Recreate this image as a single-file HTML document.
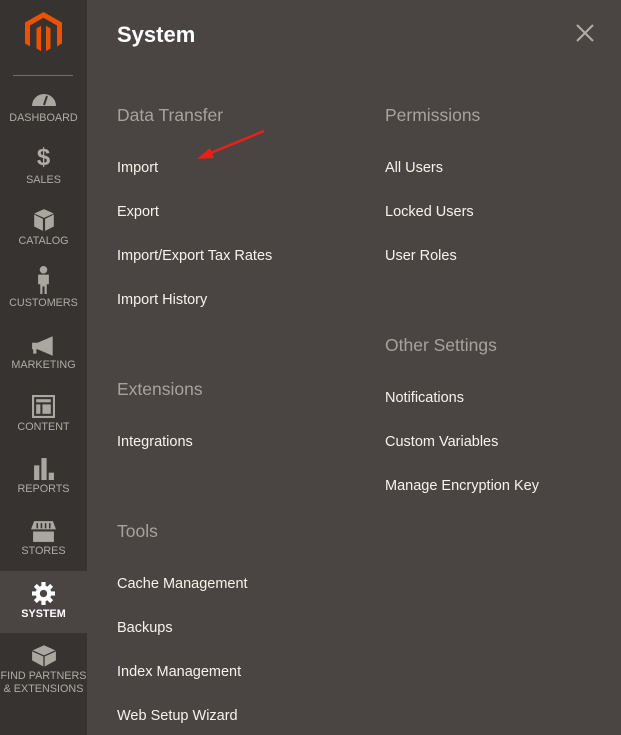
<!DOCTYPE html>
<html><head><meta charset="utf-8"><style>
body{margin:0;width:621px;height:735px;background:#4a4542;font-family:"Liberation Sans",sans-serif;position:relative;overflow:hidden}
#sb{position:absolute;left:0;top:0;width:87px;height:735px;background:#373330}
.it{position:absolute;left:0;width:87px;text-align:center;color:#b0aba5;font-size:10.8px;line-height:13px}
.it svg{display:block;margin:0 auto}
.act{background:#4a4542;color:#fff;font-weight:bold}
.t{position:absolute;color:#f7f3eb;font-size:14.5px;line-height:20px;white-space:nowrap;margin-top:1px}
.h{position:absolute;color:#a8a29c;font-size:17.5px;line-height:22px;white-space:nowrap;margin-top:2px}
</style></head><body>
<div id="sb">
<svg style="position:absolute;left:25px;top:12px" width="37" height="42" viewBox="0 0 37 42"><path d="M18.5 0L0 10.5V31.5l5 3V13.5l13.5-7.8 13.5 7.8v21l5-3V10.5z" fill="#eb5202"/><path d="M16 13.8v25.2l2.5 1.5 2.5-1.5V13.8l4.5 2.6v20.1l-7 4-7-4V16.4z" fill="#eb5202"/></svg>
<div style="position:absolute;left:13px;top:75px;width:60px;height:1px;background:#736e69"></div>
<div class="it" style="top:89px"><svg width="26" height="18" viewBox="0 0 26 18"><path d="M1 17A12 12 0 0 1 25 17z" fill="#aaa6a0"/><path d="M13 16L16 7" stroke="#373330" stroke-width="2"/></svg><div style="margin-top:5px">DASHBOARD</div></div>
<div class="it" style="top:146px"><div style="font-size:24px;font-weight:bold;line-height:24px">$</div><div style="margin-top:4px">SALES</div></div>
<div class="it" style="top:208px"><svg width="22" height="24" viewBox="0 0 20 22"><path d="M10 1L19 5 10 9 1 5z M1 6l8 4v11l-8-4z M19 6l-8 4v11l8-4z" fill="#aaa6a0"/></svg><div style="margin-top:3px">CATALOG</div></div>
<div class="it" style="top:266px"><svg width="13" height="28" viewBox="0 0 12 26"><circle cx="6" cy="3.5" r="3.5" fill="#aaa6a0"/><path d="M1 8h10v9h-2v9h-2v-7h-2v7h-2v-9h-2z" fill="#aaa6a0"/></svg><div style="margin-top:3px">CUSTOMERS</div></div>
<div class="it" style="top:336px"><svg width="26" height="20" viewBox="0 0 24 18"><path d="M1 6h5l14-6v18L6 12H5v4H2v-4H1z" fill="#aaa6a0"/></svg><div style="margin-top:3px">MARKETING</div></div>
<div class="it" style="top:395px"><svg width="23" height="23" viewBox="0 0 22 22"><rect x="1" y="1" width="20" height="20" fill="none" stroke="#aaa6a0" stroke-width="2"/><rect x="4" y="4" width="14" height="3" fill="#aaa6a0"/><rect x="4" y="9" width="4" height="9" fill="#aaa6a0"/><rect x="10" y="9" width="8" height="9" fill="#aaa6a0"/></svg><div style="margin-top:3px">CONTENT</div></div>
<div class="it" style="top:457px"><svg width="21" height="23" viewBox="0 0 20 22"><rect x="1" y="8" width="5" height="14" fill="#aaa6a0"/><rect x="8" y="1" width="5" height="21" fill="#aaa6a0"/><rect x="15" y="15" width="5" height="7" fill="#aaa6a0"/></svg><div style="margin-top:3px">REPORTS</div></div>
<div class="it" style="top:521px"><svg width="25" height="21" viewBox="0 0 24 20"><path d="M3 0h18l3 8H0z" fill="#aaa6a0"/><path d="M6 2v5M10 2v5M14 2v5M18 2v5" stroke="#373330" stroke-width="1.5"/><rect x="2" y="10" width="20" height="10" fill="#aaa6a0"/></svg><div style="margin-top:3px">STORES</div></div>
<div class="it act" style="top:571px;height:62px"><svg style="margin-top:11px" width="23" height="23" viewBox="0 0 22 22"><g fill="#fff"><circle cx="11" cy="11" r="7.5"/><rect x="9" y="0" width="4" height="22"/><rect x="0" y="9" width="22" height="4"/><rect x="9" y="0" width="4" height="22" transform="rotate(45 11 11)"/><rect x="9" y="0" width="4" height="22" transform="rotate(-45 11 11)"/></g><circle cx="11" cy="11" r="3.5" fill="#4a4542"/></svg><div style="margin-top:3px">SYSTEM</div></div>
<div class="it" style="top:643px"><svg width="26" height="24" viewBox="0 0 24 22"><path d="M12 2L23 7v9l-11 6L1 16V7z" fill="#aaa6a0"/><path d="M1 7l11 5 11-5M12 12v10" stroke="#373330" stroke-width="1.2" fill="none"/></svg><div style="margin-top:3px">FIND PARTNERS<br>&amp; EXTENSIONS</div></div>
</div>
<div style="position:absolute;left:117px;top:21px;color:#fff;font-size:22px;font-weight:bold;line-height:28px">System</div>
<svg style="position:absolute;left:576px;top:24px" width="18" height="18" viewBox="0 0 18 18"><path d="M1 1L17 17M17 1L1 17" stroke="#b3ada7" stroke-width="2"/></svg>
<div class="h" style="left:117px;top:102px">Data Transfer</div>
<div class="t" style="left:117px;top:157px">Import</div>
<div class="t" style="left:117px;top:201px">Export</div>
<div class="t" style="left:117px;top:245px">Import/Export Tax Rates</div>
<div class="t" style="left:117px;top:289px">Import History</div>
<div class="h" style="left:117px;top:376px">Extensions</div>
<div class="t" style="left:117px;top:431px">Integrations</div>
<div class="h" style="left:117px;top:518px">Tools</div>
<div class="t" style="left:117px;top:573px">Cache Management</div>
<div class="t" style="left:117px;top:617px">Backups</div>
<div class="t" style="left:117px;top:661px">Index Management</div>
<div class="t" style="left:117px;top:705px">Web Setup Wizard</div>
<div class="h" style="left:385px;top:102px">Permissions</div>
<div class="t" style="left:385px;top:157px">All Users</div>
<div class="t" style="left:385px;top:201px">Locked Users</div>
<div class="t" style="left:385px;top:245px">User Roles</div>
<div class="h" style="left:385px;top:332px">Other Settings</div>
<div class="t" style="left:385px;top:387px">Notifications</div>
<div class="t" style="left:385px;top:431px">Custom Variables</div>
<div class="t" style="left:385px;top:475px">Manage Encryption Key</div>
<svg style="position:absolute;left:0;top:0" width="621" height="735"><path d="M264 131L206 155" stroke="#e8201a" stroke-width="2.5"/><path d="M197 159L210 148 214 158z" fill="#e8201a"/></svg>
</body></html>
